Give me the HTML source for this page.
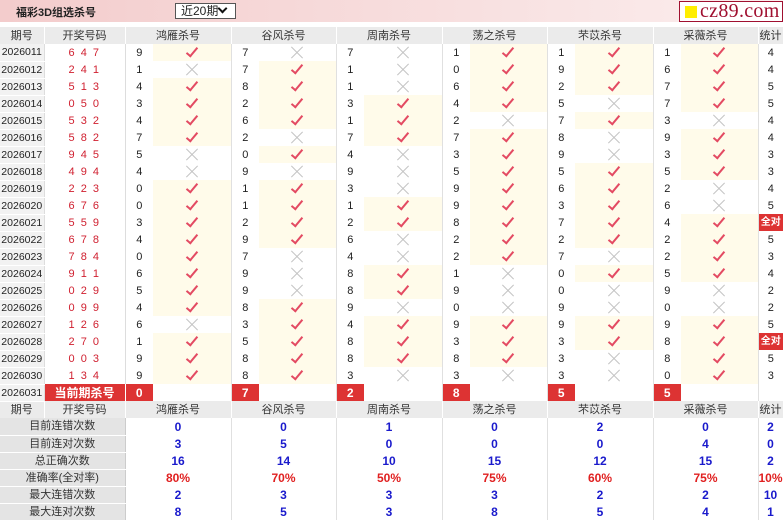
<!DOCTYPE html>
<html><head><meta charset="utf-8">
<style>
*{box-sizing:border-box}
body{margin:0;width:783px;height:521px;overflow:hidden;background:#fff;font-family:"Liberation Sans","Noto Sans CJK SC",sans-serif;font-size:11px;color:#222;position:relative}
.top{position:absolute;left:0;top:0;width:783px;height:22px;background:linear-gradient(to right,#f3cccc,#f8e0e0 60%,#fbeeee)}
.title{position:absolute;left:16px;top:4px;font-weight:bold;font-size:11px;color:#222}
.sel{position:absolute;left:175px;top:3px;width:61px;height:16px;border:1px solid #555;background:#fff;font-size:12px;line-height:14px;padding-left:5px}
.sel span{position:absolute;right:9px;top:1px;width:7px;height:7px;border:solid #111;border-width:0 2.5px 2.5px 0;transform:rotate(45deg)}
.logo{position:absolute;left:679px;top:1px;width:104px;height:21px;border:1px solid #a01030;background:#fff}
.logo i{position:absolute;left:5px;top:4px;width:12px;height:12px;background:#ffee00}
.logo b{position:absolute;left:20px;top:-1px;font-family:"Liberation Serif",serif;font-weight:normal;font-size:20px;line-height:20px;color:#a01030;letter-spacing:.3px}
table{position:absolute;left:0;top:27px;border-collapse:collapse;table-layout:fixed;width:783px}
td{height:17px;padding:0;text-align:center;white-space:nowrap;overflow:hidden;line-height:16px}
tr.h td{background:#ebebeb;color:#333;border-right:1px solid #fff}
td.i{background:#f2f2f2;border-bottom:1px solid #fff;border-right:1px solid #ddd;font-size:10.5px}
td.k{color:#d02030;letter-spacing:1.5px;border-right:1px solid #ddd}
td.y{background:#fffbea;border-right:1px solid #e0e0e0}
td.x{border-right:1px solid #e0e0e0}
td.e{border-right:1px solid #e0e0e0}
td.y b{display:inline-block;width:6px;height:12px;border:solid #e34a62;border-width:0 2px 2px 0;transform:rotate(40deg);margin-top:-4px;vertical-align:middle}
td.x i{display:inline-block;width:12px;height:12px;position:relative;vertical-align:middle;margin-top:-2px}
td.x i:before,td.x i:after{content:"";position:absolute;left:-2px;top:6px;width:16px;height:1px;background:#c4c4c4;transform:rotate(45deg)}
td.x i:after{transform:rotate(-45deg)}
td.q{background:#d33;color:#fff;font-weight:bold;font-size:10px}
td.c{background:#d33;color:#fff;font-weight:bold;font-size:12px;border-right:1px solid #fff}
td.r{background:#d33;color:#fff;font-weight:bold;font-size:12px}
tr.st td{color:#1a1acc;font-weight:bold;font-size:12px;border-right:1px solid #e0e0e0}
tr.st td.l{background:#e4e4e4;color:#333;font-weight:normal;font-size:11px;border-bottom:1px solid #fff;border-right:1px solid #ccc}
tr.st.p td{color:#e02020}
tr.st.p td.l{color:#333}
</style></head><body>
<div class="top"><div class="title">福彩3D组选杀号</div><div class="sel">近20期<span></span></div><div class="logo"><i></i><b>cz89.com</b></div></div>
<table>
<colgroup><col style="width:44px"><col style="width:81px"><col style="width:28px"><col style="width:78px"><col style="width:28px"><col style="width:77px"><col style="width:28px"><col style="width:78px"><col style="width:28px"><col style="width:77px"><col style="width:28px"><col style="width:78px"><col style="width:28px"><col style="width:77px"><col style="width:25px"></colgroup>
<tr class="h"><td>期号</td><td>开奖号码</td><td colspan="2">鸿雁杀号</td><td colspan="2">谷风杀号</td><td colspan="2">周南杀号</td><td colspan="2">荡之杀号</td><td colspan="2">芣苡杀号</td><td colspan="2">采薇杀号</td><td>统计</td></tr>
<tr><td class="i">2026011</td><td class="k">6 4 7</td><td>9</td><td class="y"><b></b></td><td>7</td><td class="x"><i></i></td><td>7</td><td class="x"><i></i></td><td>1</td><td class="y"><b></b></td><td>1</td><td class="y"><b></b></td><td>1</td><td class="y"><b></b></td><td>4</td></tr>
<tr><td class="i">2026012</td><td class="k">2 4 1</td><td>1</td><td class="x"><i></i></td><td>7</td><td class="y"><b></b></td><td>1</td><td class="x"><i></i></td><td>0</td><td class="y"><b></b></td><td>9</td><td class="y"><b></b></td><td>6</td><td class="y"><b></b></td><td>4</td></tr>
<tr><td class="i">2026013</td><td class="k">5 1 3</td><td>4</td><td class="y"><b></b></td><td>8</td><td class="y"><b></b></td><td>1</td><td class="x"><i></i></td><td>6</td><td class="y"><b></b></td><td>2</td><td class="y"><b></b></td><td>7</td><td class="y"><b></b></td><td>5</td></tr>
<tr><td class="i">2026014</td><td class="k">0 5 0</td><td>3</td><td class="y"><b></b></td><td>2</td><td class="y"><b></b></td><td>3</td><td class="y"><b></b></td><td>4</td><td class="y"><b></b></td><td>5</td><td class="x"><i></i></td><td>7</td><td class="y"><b></b></td><td>5</td></tr>
<tr><td class="i">2026015</td><td class="k">5 3 2</td><td>4</td><td class="y"><b></b></td><td>6</td><td class="y"><b></b></td><td>1</td><td class="y"><b></b></td><td>2</td><td class="x"><i></i></td><td>7</td><td class="y"><b></b></td><td>3</td><td class="x"><i></i></td><td>4</td></tr>
<tr><td class="i">2026016</td><td class="k">5 8 2</td><td>7</td><td class="y"><b></b></td><td>2</td><td class="x"><i></i></td><td>7</td><td class="y"><b></b></td><td>7</td><td class="y"><b></b></td><td>8</td><td class="x"><i></i></td><td>9</td><td class="y"><b></b></td><td>4</td></tr>
<tr><td class="i">2026017</td><td class="k">9 4 5</td><td>5</td><td class="x"><i></i></td><td>0</td><td class="y"><b></b></td><td>4</td><td class="x"><i></i></td><td>3</td><td class="y"><b></b></td><td>9</td><td class="x"><i></i></td><td>3</td><td class="y"><b></b></td><td>3</td></tr>
<tr><td class="i">2026018</td><td class="k">4 9 4</td><td>4</td><td class="x"><i></i></td><td>9</td><td class="x"><i></i></td><td>9</td><td class="x"><i></i></td><td>5</td><td class="y"><b></b></td><td>5</td><td class="y"><b></b></td><td>5</td><td class="y"><b></b></td><td>3</td></tr>
<tr><td class="i">2026019</td><td class="k">2 2 3</td><td>0</td><td class="y"><b></b></td><td>1</td><td class="y"><b></b></td><td>3</td><td class="x"><i></i></td><td>9</td><td class="y"><b></b></td><td>6</td><td class="y"><b></b></td><td>2</td><td class="x"><i></i></td><td>4</td></tr>
<tr><td class="i">2026020</td><td class="k">6 7 6</td><td>0</td><td class="y"><b></b></td><td>1</td><td class="y"><b></b></td><td>1</td><td class="y"><b></b></td><td>9</td><td class="y"><b></b></td><td>3</td><td class="y"><b></b></td><td>6</td><td class="x"><i></i></td><td>5</td></tr>
<tr><td class="i">2026021</td><td class="k">5 5 9</td><td>3</td><td class="y"><b></b></td><td>2</td><td class="y"><b></b></td><td>2</td><td class="y"><b></b></td><td>8</td><td class="y"><b></b></td><td>7</td><td class="y"><b></b></td><td>4</td><td class="y"><b></b></td><td class="q">全对</td></tr>
<tr><td class="i">2026022</td><td class="k">6 7 8</td><td>4</td><td class="y"><b></b></td><td>9</td><td class="y"><b></b></td><td>6</td><td class="x"><i></i></td><td>2</td><td class="y"><b></b></td><td>2</td><td class="y"><b></b></td><td>2</td><td class="y"><b></b></td><td>5</td></tr>
<tr><td class="i">2026023</td><td class="k">7 8 4</td><td>0</td><td class="y"><b></b></td><td>7</td><td class="x"><i></i></td><td>4</td><td class="x"><i></i></td><td>2</td><td class="y"><b></b></td><td>7</td><td class="x"><i></i></td><td>2</td><td class="y"><b></b></td><td>3</td></tr>
<tr><td class="i">2026024</td><td class="k">9 1 1</td><td>6</td><td class="y"><b></b></td><td>9</td><td class="x"><i></i></td><td>8</td><td class="y"><b></b></td><td>1</td><td class="x"><i></i></td><td>0</td><td class="y"><b></b></td><td>5</td><td class="y"><b></b></td><td>4</td></tr>
<tr><td class="i">2026025</td><td class="k">0 2 9</td><td>5</td><td class="y"><b></b></td><td>9</td><td class="x"><i></i></td><td>8</td><td class="y"><b></b></td><td>9</td><td class="x"><i></i></td><td>0</td><td class="x"><i></i></td><td>9</td><td class="x"><i></i></td><td>2</td></tr>
<tr><td class="i">2026026</td><td class="k">0 9 9</td><td>4</td><td class="y"><b></b></td><td>8</td><td class="y"><b></b></td><td>9</td><td class="x"><i></i></td><td>0</td><td class="x"><i></i></td><td>9</td><td class="x"><i></i></td><td>0</td><td class="x"><i></i></td><td>2</td></tr>
<tr><td class="i">2026027</td><td class="k">1 2 6</td><td>6</td><td class="x"><i></i></td><td>3</td><td class="y"><b></b></td><td>4</td><td class="y"><b></b></td><td>9</td><td class="y"><b></b></td><td>9</td><td class="y"><b></b></td><td>9</td><td class="y"><b></b></td><td>5</td></tr>
<tr><td class="i">2026028</td><td class="k">2 7 0</td><td>1</td><td class="y"><b></b></td><td>5</td><td class="y"><b></b></td><td>8</td><td class="y"><b></b></td><td>3</td><td class="y"><b></b></td><td>3</td><td class="y"><b></b></td><td>8</td><td class="y"><b></b></td><td class="q">全对</td></tr>
<tr><td class="i">2026029</td><td class="k">0 0 3</td><td>9</td><td class="y"><b></b></td><td>8</td><td class="y"><b></b></td><td>8</td><td class="y"><b></b></td><td>8</td><td class="y"><b></b></td><td>3</td><td class="x"><i></i></td><td>8</td><td class="y"><b></b></td><td>5</td></tr>
<tr><td class="i">2026030</td><td class="k">1 3 4</td><td>9</td><td class="y"><b></b></td><td>8</td><td class="y"><b></b></td><td>3</td><td class="x"><i></i></td><td>3</td><td class="x"><i></i></td><td>3</td><td class="x"><i></i></td><td>0</td><td class="y"><b></b></td><td>3</td></tr>
<tr><td class="i">2026031</td><td class="c">当前期杀号</td><td class="r">0</td><td class="e"></td><td class="r">7</td><td class="e"></td><td class="r">2</td><td class="e"></td><td class="r">8</td><td class="e"></td><td class="r">5</td><td class="e"></td><td class="r">5</td><td class="e"></td><td></td></tr>
<tr class="h"><td>期号</td><td>开奖号码</td><td colspan="2">鸿雁杀号</td><td colspan="2">谷风杀号</td><td colspan="2">周南杀号</td><td colspan="2">荡之杀号</td><td colspan="2">芣苡杀号</td><td colspan="2">采薇杀号</td><td>统计</td></tr>
<tr class="st"><td class="l" colspan="2">目前连错次数</td><td colspan="2">0</td><td colspan="2">0</td><td colspan="2">1</td><td colspan="2">0</td><td colspan="2">2</td><td colspan="2">0</td><td>2</td></tr>
<tr class="st"><td class="l" colspan="2">目前连对次数</td><td colspan="2">3</td><td colspan="2">5</td><td colspan="2">0</td><td colspan="2">0</td><td colspan="2">0</td><td colspan="2">4</td><td>0</td></tr>
<tr class="st"><td class="l" colspan="2">总正确次数</td><td colspan="2">16</td><td colspan="2">14</td><td colspan="2">10</td><td colspan="2">15</td><td colspan="2">12</td><td colspan="2">15</td><td>2</td></tr>
<tr class="st p"><td class="l" colspan="2">准确率(全对率)</td><td colspan="2">80%</td><td colspan="2">70%</td><td colspan="2">50%</td><td colspan="2">75%</td><td colspan="2">60%</td><td colspan="2">75%</td><td>10%</td></tr>
<tr class="st"><td class="l" colspan="2">最大连错次数</td><td colspan="2">2</td><td colspan="2">3</td><td colspan="2">3</td><td colspan="2">3</td><td colspan="2">2</td><td colspan="2">2</td><td>10</td></tr>
<tr class="st"><td class="l" colspan="2">最大连对次数</td><td colspan="2">8</td><td colspan="2">5</td><td colspan="2">3</td><td colspan="2">8</td><td colspan="2">5</td><td colspan="2">4</td><td>1</td></tr>
</table>
</body></html>
